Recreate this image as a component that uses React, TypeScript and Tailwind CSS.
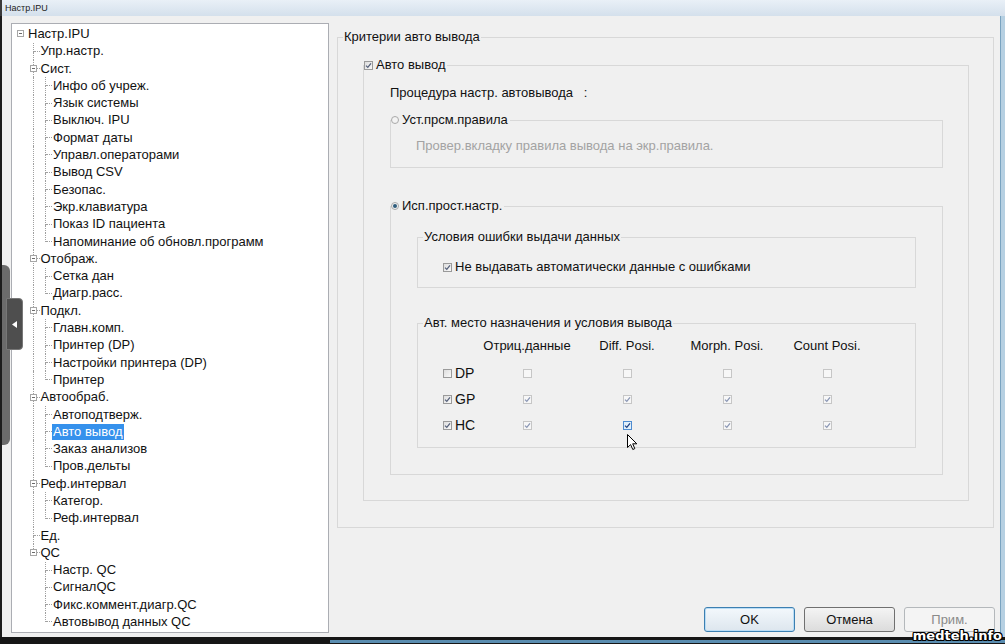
import React from 'react';

type N = { label: string; children?: N[]; selected?: boolean };

const tree: N = {
  label: 'Настр.IPU',
  children: [
    { label: 'Упр.настр.' },
    {
      label: 'Сист.',
      children: [
        { label: 'Инфо об учреж.' },
        { label: 'Язык системы' },
        { label: 'Выключ. IPU' },
        { label: 'Формат даты' },
        { label: 'Управл.операторами' },
        { label: 'Вывод CSV' },
        { label: 'Безопас.' },
        { label: 'Экр.клавиатура' },
        { label: 'Показ ID пациента' },
        { label: 'Напоминание об обновл.программ' },
      ],
    },
    { label: 'Отображ.', children: [{ label: 'Сетка дан' }, { label: 'Диагр.расс.' }] },
    {
      label: 'Подкл.',
      children: [
        { label: 'Главн.комп.' },
        { label: 'Принтер (DP)' },
        { label: 'Настройки принтера (DP)' },
        { label: 'Принтер' },
      ],
    },
    {
      label: 'Автообраб.',
      children: [
        { label: 'Автоподтверж.' },
        { label: 'Авто вывод', selected: true },
        { label: 'Заказ анализов' },
        { label: 'Пров.дельты' },
      ],
    },
    { label: 'Реф.интервал', children: [{ label: 'Категор.' }, { label: 'Реф.интервал' }] },
    { label: 'Ед.' },
    {
      label: 'QC',
      children: [
        { label: 'Настр. QC' },
        { label: 'СигналQC' },
        { label: 'Фикс.коммент.диагр.QC' },
        { label: 'Автовывод данных QC' },
      ],
    },
  ],
};

type Row = {
  label: string;
  depth: number;
  hasChildren: boolean;
  isLast: boolean;
  anc: boolean[];
  selected?: boolean;
};

function flatten(n: N, depth: number, anc: boolean[], isLast: boolean, out: Row[]) {
  out.push({ label: n.label, depth, hasChildren: !!n.children, isLast, anc, selected: n.selected });
  const ch = n.children || [];
  ch.forEach((c, i) => flatten(c, depth + 1, [...anc, !isLast], i === ch.length - 1, out));
}

const rows: Row[] = [];
flatten(tree, 0, [], true, rows);

function Expander() {
  return (
    <span className="absolute left-[3px] top-[5px] z-10 flex h-[7px] w-[7px] items-center justify-center border border-[#a6a6a6] bg-white">
      <span className="h-px w-[3px] bg-[#6a6a6a]" />
    </span>
  );
}

function TreeRow({ r }: { r: Row }) {
  const cells: React.ReactNode[] = [];
  for (let k = 0; k < r.depth; k++) {
    cells.push(
      <span key={k} className="relative h-full w-[12.5px] shrink-0">
        {k > 0 && r.anc[k] && (
          <span className="absolute left-[6px] top-0 h-full border-l border-dotted border-[#a0a0a0]" />
        )}
      </span>
    );
  }
  cells.push(
    <span key="own" className="relative h-full w-[12.5px] shrink-0">
      {r.depth > 0 && (
        <>
          <span className="absolute left-[6px] top-0 h-[9px] border-l border-dotted border-[#a0a0a0]" />
          {!r.isLast && (
            <span className="absolute left-[6px] top-[9px] bottom-0 border-l border-dotted border-[#a0a0a0]" />
          )}
          <span className="absolute left-[7px] top-[8px] w-[6px] border-t border-dotted border-[#a0a0a0]" />
        </>
      )}
      {r.hasChildren && <Expander />}
    </span>
  );
  return (
    <div className="flex h-[17.3px] items-center">
      {cells}
      <span
        className={`whitespace-nowrap pl-[1.5px] pr-[2px] leading-[16px] ${
          r.selected ? 'bg-[#3591ec] text-white' : 'text-[#111]'
        }`}
      >
        {r.label}
      </span>
    </div>
  );
}

type CbKind = 'enabled' | 'table' | 'hover';

function Check({ color }: { color: string }) {
  return (
    <svg width="7" height="7" viewBox="0 0 7 7" className="block">
      <path d="M1 3.6 L2.8 5.4 L6 1.4" fill="none" stroke={color} strokeWidth="1.3" />
    </svg>
  );
}

function Cb({ checked, kind = 'enabled' }: { checked?: boolean; kind?: CbKind }) {
  const box =
    kind === 'enabled'
      ? 'border-[#9a9a9a] bg-linear-to-br from-[#dedede] to-[#f9f9f9]'
      : kind === 'table'
      ? 'border-[#c6c6c6] bg-[#f7f7f7]'
      : 'border-[#4d8bd0] bg-[#e1f0fb]';
  const col = kind === 'enabled' ? '#55607a' : kind === 'table' ? '#8a96b4' : '#1f3f80';
  return (
    <span className={`flex h-[9px] w-[9px] shrink-0 items-center justify-center border ${box}`}>
      {checked && <Check color={col} />}
    </span>
  );
}

function Radio({ selected }: { selected?: boolean }) {
  return (
    <span className="flex h-[8px] w-[8px] shrink-0 items-center justify-center rounded-full border border-[#a9a9a9] bg-[#f3f3f3]">
      {selected && <span className="h-[4px] w-[4px] rounded-full bg-[#2f5d7c]" />}
    </span>
  );
}

function Group({
  legend,
  className = '',
  legendClass = 'ml-[5px] px-[1px]',
  children,
}: {
  legend: React.ReactNode;
  className?: string;
  legendClass?: string;
  children: React.ReactNode;
}) {
  return (
    <fieldset className={`min-w-0 border border-[#d8d8d8] ${className}`}>
      <legend className={`leading-[16px] ${legendClass}`}>{legend}</legend>
      {children}
    </fieldset>
  );
}

const cols = ['Отриц.данные', 'Diff. Posi.', 'Morph. Posi.', 'Count Posi.'];
const tableRows: { label: string; checked: boolean }[] = [
  { label: 'DP', checked: false },
  { label: 'GP', checked: true },
  { label: 'HC', checked: true },
];

export default function App() {
  return (
    <div
      className="relative flex h-[644px] w-[1005px] flex-col overflow-hidden bg-[#f0f0f0] text-[13px] text-[#111]"
      style={{ fontFamily: '"Liberation Sans", Arial, sans-serif' }}
    >
      {/* title bar */}
      <div className="flex h-[16px] shrink-0 items-center border-l-2 border-[#3a3a3a] bg-linear-to-b from-[#e9f0f7] to-[#d4e0ec] pl-[3px] text-[9px] leading-[16px] text-[#222]">
        Настр.IPU
      </div>

      {/* body */}
      <div className="flex min-h-0 flex-1">
        <div className="w-[2px] shrink-0 bg-[#1c1c1c]" />

        {/* tree */}
        <div className="ml-[9px] mt-[7px] h-[610px] w-[318px] shrink-0 border border-[#abadb3] bg-white pl-[2px] pt-[1.35px]">
          {rows.map((r, i) => (
            <TreeRow key={i} r={r} />
          ))}
        </div>

        {/* right */}
        <div className="flex min-w-0 flex-1 flex-col">
          <Group legend="Критерии авто вывода" className="ml-[8px] mr-[6px] mt-[13px]">
            <Group
              className="mb-[26px] ml-[25px] mr-[24px] mt-[12px]"
              legendClass="ml-0"
              legend={
                <span className="flex items-center gap-[3px] pr-[2px]">
                  <Cb checked />
                  <span>Авто вывод</span>
                </span>
              }
            >
              <div className="ml-[26px] mt-[12px] whitespace-pre leading-[16px]">
                {'Процедура настр. автовывода   :'}
              </div>

              <Group
                className="ml-[26px] mr-[25px] mt-[11px]"
                legendClass="ml-0"
                legend={
                  <span className="flex items-center gap-[3px] pr-[2px]">
                    <Radio />
                    <span>Уст.прсм.правила</span>
                  </span>
                }
              >
                <div className="mb-[13px] ml-[25px] mt-[10px] leading-[16px] text-[#a3a3a3]">
                  Провер.вкладку правила вывода на экр.правила.
                </div>
              </Group>

              <Group
                className="mb-[25px] ml-[26px] mr-[25px] mt-[30px]"
                legendClass="ml-0"
                legend={
                  <span className="flex items-center gap-[3px] pr-[2px]">
                    <Radio selected />
                    <span>Исп.прост.настр.</span>
                  </span>
                }
              >
                <Group legend="Условия ошибки выдачи данных" className="ml-[26px] mr-[26px] mt-[15px]">
                  <div className="mb-[12px] ml-[25px] mt-[14px] flex h-[16px] items-center gap-[3px]">
                    <Cb checked />
                    <span>Не выдавать автоматически данные с ошибками</span>
                  </div>
                </Group>

                <Group
                  legend="Авт. место назначения и условия вывода"
                  className="mb-[26px] ml-[26px] mr-[26px] mt-[27px]"
                >
                  <div className="ml-[25px] pb-[9px] pt-[7px]">
                    <div className="grid h-[16px] grid-cols-[34px_100px_100px_100px_100px] items-center leading-[16px]">
                      <span />
                      {cols.map((c) => (
                        <span key={c} className="text-center">
                          {c}
                        </span>
                      ))}
                    </div>
                    <div className="mt-[6px]">
                      {tableRows.map((tr) => (
                        <div
                          key={tr.label}
                          className="grid h-[26px] grid-cols-[34px_100px_100px_100px_100px] items-center"
                        >
                          <span className="flex items-center gap-[3px]">
                            <Cb checked={tr.checked} />
                            <span className="text-[14px]">{tr.label}</span>
                          </span>
                          {cols.map((c, ci) => (
                            <span key={c} className="flex justify-center">
                              <Cb
                                checked={tr.checked}
                                kind={tr.label === 'HC' && ci === 1 ? 'hover' : 'table'}
                              />
                            </span>
                          ))}
                        </div>
                      ))}
                    </div>
                  </div>
                </Group>
              </Group>
            </Group>
          </Group>

          {/* buttons */}
          <div className="mb-[5px] mt-auto flex justify-end gap-[9px] pr-[5px]">
            <button className="h-[25px] w-[91px] rounded-[3px] border border-[#3c7fb1] bg-linear-to-b from-[#f3f8fc] to-[#dde6ee] text-[13px] text-[#111] shadow-[inset_0_0_0_1px_#b9dcf5]">
              OK
            </button>
            <button className="h-[25px] w-[91px] rounded-[3px] border border-[#707070] bg-linear-to-b from-[#f4f4f4] to-[#dcdcdc] text-[13px] text-[#111]">
              Отмена
            </button>
            <button className="h-[25px] w-[91px] rounded-[3px] border border-[#b4b8bb] bg-[#f4f4f4] text-[13px] text-[#8a8a8a]">
              Прим.
            </button>
          </div>
        </div>

        <div className="w-[5px] shrink-0 border-l border-[#7aa3c0] bg-[#b6d0e2]" />
      </div>

      {/* bottom border */}
      <div className="h-[7px] shrink-0 bg-[#161616] pt-[3px]">
        <div className="ml-[330px] h-[3px] bg-[#5a8db0]" />
      </div>

      {/* left slide-out handle */}
      <div className="absolute left-[2px] top-[265px] h-[180px] w-[8px] rounded-r-[6px] bg-[#6b6b6b]" />
      <div className="absolute left-[6px] top-[298px] flex h-[52px] w-[17px] items-center justify-center rounded-r-[4px] border border-[#777] bg-[#4e4e4e]">
        <svg width="5" height="7" viewBox="0 0 5 7">
          <path d="M5 0 L0 3.5 L5 7 Z" fill="#fff" />
        </svg>
      </div>

      {/* mouse cursor */}
      <svg className="absolute left-[627px] top-[434px]" width="11" height="17" viewBox="0 0 11 17">
        <path
          d="M0.5 0.5 L0.5 13.5 L3.6 10.6 L5.8 15.5 L7.8 14.6 L5.7 9.8 L9.8 9.8 Z"
          fill="#fff"
          stroke="#000"
          strokeWidth="1"
          strokeLinejoin="round"
        />
      </svg>

      {/* watermark */}
      <div
        className="absolute bottom-[1px] right-[3px] text-[13px] font-bold leading-[15px] text-white [text-shadow:1px_0_0_#000,-1px_0_0_#000,0_1px_0_#000,0_-1px_0_#000,1px_1px_0_#000,-1px_-1px_0_#000,1px_-1px_0_#000,-1px_1px_0_#000]"
        style={{ fontFamily: '"DejaVu Sans", sans-serif' }}
      >
        medteh.info
      </div>
    </div>
  );
}
